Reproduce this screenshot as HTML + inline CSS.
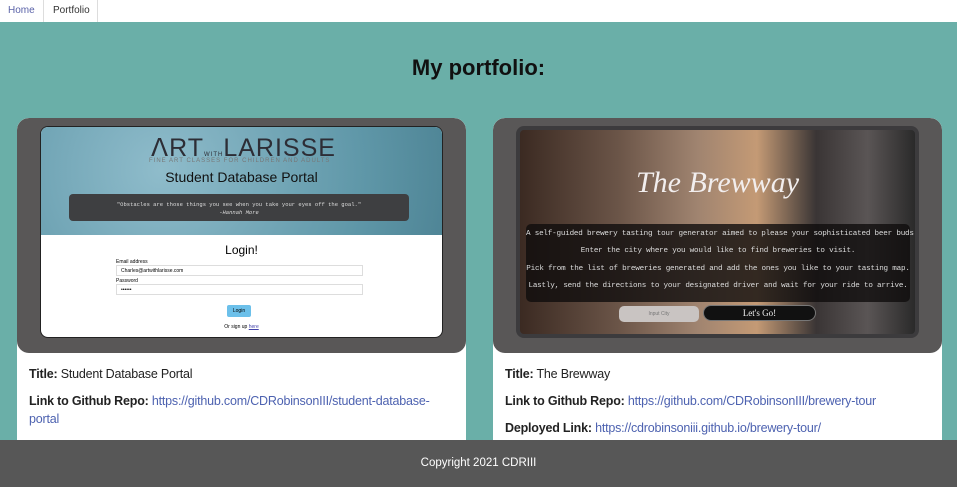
<!DOCTYPE html>
<html><head><style>
*{margin:0;padding:0;box-sizing:border-box}
body{width:957px;height:487px;overflow:hidden;background:#6aafa8;font-family:"Liberation Sans",sans-serif;position:relative}
.nav{position:absolute;left:0;top:0;width:957px;height:22px;background:#fff;font-size:10px}
.nav span{position:absolute;top:5px}
h1{position:absolute;top:55px;width:957px;text-align:center;font-size:22px;font-weight:bold;color:#111}
.card{position:absolute;top:118px;width:449px;height:330px;background:#fff;border-radius:12px 12px 0 0;overflow:hidden}
.top{height:235px;background:#595757;border-radius:12px;position:relative}
.info{padding:12px 12px;font-size:12.5px;color:#222;line-height:18px;letter-spacing:-.2px}
.info p{margin-bottom:9px}
.info a{color:#4d62b0;text-decoration:none}
.shot{position:absolute;border-radius:8px;overflow:hidden}
.foot{position:absolute;left:0;top:440px;width:957px;height:47px;background:#575757;color:#fff;font-size:11.5px;text-align:center;line-height:47px}
</style></head><body>
<div class="nav"><span style="left:8px;color:#5a62a8">Home</span><span style="left:43px;top:0;height:22px;width:55px;border-left:1px solid #ddd;border-right:1px solid #ddd"></span><span style="left:53px;color:#333">Portfolio</span></div>
<h1>My portfolio:</h1>
<div class="card" style="left:17px">
 <div class="top">
  <div class="shot" style="left:23px;top:8px;width:403px;height:212px;border:1px solid #222;background:#fff">
   <div style="height:108px;background:radial-gradient(circle at 30% 40%,#8fbccb,#5f97a8 70%,#4f8596)">
    <div style="position:absolute;left:110px;top:6px;font-size:25px;color:#2d2d35;letter-spacing:1px">ᐱRT<span style="font-size:6px">WITH</span>LARISSE</div>
    <div style="position:absolute;left:108px;top:31px;font-size:6px;color:#777;letter-spacing:1px">FINE ART CLASSES FOR CHILDREN AND ADULTS</div>
    <div style="position:absolute;width:100%;top:42px;text-align:center;font-size:14px;color:#111">Student Database Portal</div>
    <div style="position:absolute;left:28px;top:67px;width:340px;height:27px;background:#3e3f41;border-radius:4px;color:#ddd;font-family:'Liberation Mono',monospace;font-size:5.5px;text-align:center;padding-top:7px;line-height:8px">"Obstacles are those things you see when you take your eyes off the goal."<br><i>-Hannah More</i></div>
   </div>
   <div style="text-align:center;font-size:12px;margin-top:8px">Login!</div>
   <div style="position:absolute;left:75px;top:132px;font-size:5px">Email address</div>
   <div style="position:absolute;left:75px;top:138px;width:247px;height:11px;border:1px solid #ddd;font-size:5px;padding:2px 4px">Charles@artwithlarisse.com</div>
   <div style="position:absolute;left:75px;top:151px;font-size:5px">Password</div>
   <div style="position:absolute;left:75px;top:157px;width:247px;height:11px;border:1px solid #ddd;font-size:5px;padding:2px 4px">••••••</div>
   <div style="position:absolute;left:186px;top:178px;width:24px;height:12px;background:#6cc0ea;border-radius:2px;font-size:5px;text-align:center;line-height:12px">Login</div>
   <div style="position:absolute;width:100%;top:197px;text-align:center;font-size:5px">Or sign up <u style="color:#44a">here</u></div>
  </div>
 </div>
 <div class="info"><p><b>Title:</b> Student Database Portal</p><p><b>Link to Github Repo:</b> <a>https://github.com/CDRobinsonIII/student-database-portal</a></p></div>
</div>
<div class="card" style="left:493px">
 <div class="top">
  <div class="shot" style="left:23px;top:8px;width:403px;height:212px;border:4px solid #3c3b3d;background:linear-gradient(90deg,#3b2a22 0%,#6b5548 25%,#a08470 45%,#c49a75 60%,#3a3535 75%,#5a5555 88%,#2a2a2a 100%)">
   <div style="position:absolute;width:100%;top:36px;text-align:center;font-family:'Liberation Serif',serif;font-style:italic;font-size:30px;color:#f2eeee">The Brewway</div>
   <div style="position:absolute;left:6px;top:94px;width:384px;height:78px;background:rgba(15,12,12,.8);border-radius:5px;color:#ddd;font-family:'Liberation Mono',monospace;font-size:7.6px;text-align:center;line-height:17.3px;padding-top:2px;letter-spacing:-.2px;white-space:nowrap">A self-guided brewery tasting tour generator aimed to please your sophisticated beer buds.<br>Enter the city where you would like to find breweries to visit.<br>Pick from the list of breweries generated and add the ones you like to your tasting map.<br>Lastly, send the directions to your designated driver and wait for your ride to arrive.</div>
   <div style="position:absolute;left:99px;top:176px;width:80px;height:16px;background:#c9c4c2;border-radius:5px;font-size:5px;color:#777;text-align:center;line-height:16px">Input City</div>
   <div style="position:absolute;left:183px;top:175px;width:113px;height:16px;background:#111;border:1px solid #777;border-radius:8px;font-size:9px;color:#eee;text-align:center;line-height:14px;font-family:'Liberation Serif',serif">Let's Go!</div>
  </div>
 </div>
 <div class="info"><p><b>Title:</b> The Brewway</p><p><b>Link to Github Repo:</b> <a>https://github.com/CDRobinsonIII/brewery-tour</a></p><p><b>Deployed Link:</b> <a>https://cdrobinsoniii.github.io/brewery-tour/</a></p></div>
</div>
<div class="foot">Copyright 2021 CDRIII</div>
</body></html>
